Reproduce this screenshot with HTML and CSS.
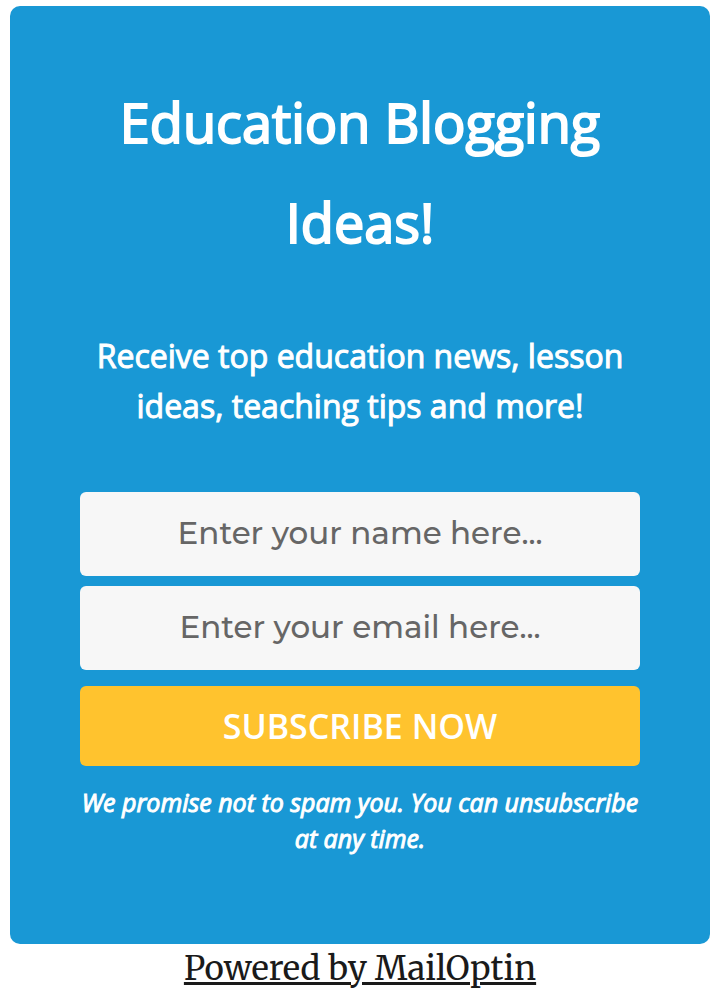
FILE: index.html
```html
<!DOCTYPE html>
<html lang="en">
<head>
<meta charset="utf-8">
<meta name="viewport" content="width=device-width, initial-scale=1">
<title>Education Blogging Ideas!</title>
<link rel="stylesheet" href="styles.css">
</head>
<body>
<main class="optin">
  <form class="card">
    <h1 class="headline">Education Blogging Ideas!</h1>
    <p class="description">Receive top education news, lesson ideas, teaching tips and more!</p>
    <div class="fields">
      <input class="field" type="text" name="name" aria-label="Name" placeholder="Enter your name here...">
      <input class="field" type="email" name="email" aria-label="Email" placeholder="Enter your email here...">
    </div>
    <button class="submit" type="submit">SUBSCRIBE NOW</button>
    <p class="note">We promise not to spam you. You can unsubscribe at any time.</p>
  </form>
  <a class="credit" href="#">Powered by MailOptin</a>
</main>
</body>
</html>
```

FILE: styles.css
```css
* {
  box-sizing: border-box;
}

body {
  margin: 0;
  background: #fff;
  font-family: "Open Sans", sans-serif;
}

.optin {
  padding: 6px 6px 0 10px;
  text-align: center;
}

.card {
  padding: 66px 70px 88px;
  border-radius: 10px;
  background: #1998d5;
  color: #fff;
}

.headline {
  margin: 0;
  font-size: 54px;
  font-weight: 400;
  line-height: 100px;
  -webkit-text-stroke: 2px #fff;
}

.description {
  margin: 59px 0 61px;
  font-size: 32px;
  line-height: 50px;
  -webkit-text-stroke: 1px #fff;
}

.fields {
  display: grid;
  gap: 10px;
}

.field {
  width: 100%;
  height: 84px;
  padding: 0 16px 2px;
  border: 0;
  border-radius: 6px;
  background: #f7f7f7;
  color: #555;
  font-family: Montserrat, "Open Sans", sans-serif;
  font-size: 31px;
  font-weight: 500;
  text-align: center;
}

.field::placeholder {
  color: #666;
  opacity: 1;
}

.submit {
  display: block;
  width: 100%;
  height: 80px;
  margin: 16px 0 18px;
  border: 0;
  border-radius: 6px;
  background: #ffc32e;
  color: #fff;
  font-family: inherit;
  font-size: 34px;
  font-weight: 600;
}

.note {
  margin: 0;
  font-size: 25px;
  font-style: italic;
  line-height: 36px;
  -webkit-text-stroke: 1px #fff;
}

.credit {
  display: block;
  color: #1a1a1a;
  font-family: Merriweather, "Liberation Serif", serif;
  font-size: 33px;
  line-height: 50px;
}
```
